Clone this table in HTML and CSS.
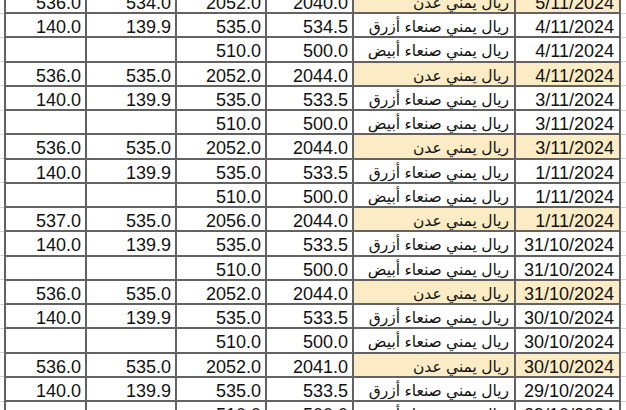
FILE: index.html
```html
<!DOCTYPE html>
<html lang="ar">
<head>
<meta charset="utf-8">
<title>أسعار الصرف</title>
<link rel="stylesheet" href="styles.css">
</head>
<body>
<div class="sheet">
  <div class="rows" id="rows">
    <div class="row aden"><span class="gut"></span><span class="c n">536.0</span><span class="c n">534.0</span><span class="c n">2052.0</span><span class="c n">2040.0</span><span class="c t">ريال يمني عدن</span><span class="c d">5/11/2024</span><span class="gut"></span></div>
    <div class="row"><span class="gut"></span><span class="c n">140.0</span><span class="c n">139.9</span><span class="c n">535.0</span><span class="c n">534.5</span><span class="c t">ريال يمني صنعاء أزرق</span><span class="c d">4/11/2024</span><span class="gut"></span></div>
    <div class="row"><span class="gut"></span><span class="c n"></span><span class="c n"></span><span class="c n">510.0</span><span class="c n">500.0</span><span class="c t">ريال يمني صنعاء أبيض</span><span class="c d">4/11/2024</span><span class="gut"></span></div>
    <div class="row aden"><span class="gut"></span><span class="c n">536.0</span><span class="c n">535.0</span><span class="c n">2052.0</span><span class="c n">2044.0</span><span class="c t">ريال يمني عدن</span><span class="c d">4/11/2024</span><span class="gut"></span></div>
    <div class="row"><span class="gut"></span><span class="c n">140.0</span><span class="c n">139.9</span><span class="c n">535.0</span><span class="c n">533.5</span><span class="c t">ريال يمني صنعاء أزرق</span><span class="c d">3/11/2024</span><span class="gut"></span></div>
    <div class="row"><span class="gut"></span><span class="c n"></span><span class="c n"></span><span class="c n">510.0</span><span class="c n">500.0</span><span class="c t">ريال يمني صنعاء أبيض</span><span class="c d">3/11/2024</span><span class="gut"></span></div>
    <div class="row aden"><span class="gut"></span><span class="c n">536.0</span><span class="c n">535.0</span><span class="c n">2052.0</span><span class="c n">2044.0</span><span class="c t">ريال يمني عدن</span><span class="c d">3/11/2024</span><span class="gut"></span></div>
    <div class="row"><span class="gut"></span><span class="c n">140.0</span><span class="c n">139.9</span><span class="c n">535.0</span><span class="c n">533.5</span><span class="c t">ريال يمني صنعاء أزرق</span><span class="c d">1/11/2024</span><span class="gut"></span></div>
    <div class="row"><span class="gut"></span><span class="c n"></span><span class="c n"></span><span class="c n">510.0</span><span class="c n">500.0</span><span class="c t">ريال يمني صنعاء أبيض</span><span class="c d">1/11/2024</span><span class="gut"></span></div>
    <div class="row aden"><span class="gut"></span><span class="c n">537.0</span><span class="c n">535.0</span><span class="c n">2056.0</span><span class="c n">2044.0</span><span class="c t">ريال يمني عدن</span><span class="c d">1/11/2024</span><span class="gut"></span></div>
    <div class="row"><span class="gut"></span><span class="c n">140.0</span><span class="c n">139.9</span><span class="c n">535.0</span><span class="c n">533.5</span><span class="c t">ريال يمني صنعاء أزرق</span><span class="c d">31/10/2024</span><span class="gut"></span></div>
    <div class="row"><span class="gut"></span><span class="c n"></span><span class="c n"></span><span class="c n">510.0</span><span class="c n">500.0</span><span class="c t">ريال يمني صنعاء أبيض</span><span class="c d">31/10/2024</span><span class="gut"></span></div>
    <div class="row aden"><span class="gut"></span><span class="c n">536.0</span><span class="c n">535.0</span><span class="c n">2052.0</span><span class="c n">2044.0</span><span class="c t">ريال يمني عدن</span><span class="c d">31/10/2024</span><span class="gut"></span></div>
    <div class="row"><span class="gut"></span><span class="c n">140.0</span><span class="c n">139.9</span><span class="c n">535.0</span><span class="c n">533.5</span><span class="c t">ريال يمني صنعاء أزرق</span><span class="c d">30/10/2024</span><span class="gut"></span></div>
    <div class="row"><span class="gut"></span><span class="c n"></span><span class="c n"></span><span class="c n">510.0</span><span class="c n">500.0</span><span class="c t">ريال يمني صنعاء أبيض</span><span class="c d">30/10/2024</span><span class="gut"></span></div>
    <div class="row aden"><span class="gut"></span><span class="c n">536.0</span><span class="c n">535.0</span><span class="c n">2052.0</span><span class="c n">2041.0</span><span class="c t">ريال يمني عدن</span><span class="c d">30/10/2024</span><span class="gut"></span></div>
    <div class="row"><span class="gut"></span><span class="c n">140.0</span><span class="c n">139.9</span><span class="c n">535.0</span><span class="c n">533.5</span><span class="c t">ريال يمني صنعاء أزرق</span><span class="c d">29/10/2024</span><span class="gut"></span></div>
    <div class="row"><span class="gut"></span><span class="c n"></span><span class="c n"></span><span class="c n">510.0</span><span class="c n">500.0</span><span class="c t">ريال يمني صنعاء أبيض</span><span class="c d">29/10/2024</span><span class="gut"></span></div>
  </div>
</div>
</body>
</html>
```
FILE: styles.css
```css
html, body {
  margin: 0;
  padding: 0;
  background: #ffffff;
}

.sheet {
  width: 626px;
  height: 410px;
  overflow: hidden;
  background: #ffffff;
  font-family: "Liberation Sans", Arial, "DejaVu Sans", sans-serif;
  color: #111111;
}

.rows {
  margin-top: -10.25px;
}

.row {
  display: grid;
  grid-template-columns: 3.5px 83.5px 90px 90px 87px 162px 105px 1fr;
  height: 24.25px;
}

.gut {
  border-bottom: 1px solid #d4d4d4;
  margin-bottom: 0.5px;
}

.row > .c {
  box-sizing: border-box;
  height: 24.25px;
  border-right: 2px solid #626262;
  border-bottom: 2px solid #626262;
  font-size: 18px;
  line-height: 20px;
  padding: 3px 4px 0 0;
  text-align: right;
  white-space: nowrap;
  overflow: hidden;
}

.row > .c:nth-child(2) {
  border-left: 2px solid #626262;
}

.row > .t {
  direction: rtl;
  text-align: right;
  padding-right: 5px;
  font-size: 15.5px;
}

.row > .d {
  padding-right: 5px;
}

.aden > .t,
.aden > .d {
  background: #fcecc6;
}
```
